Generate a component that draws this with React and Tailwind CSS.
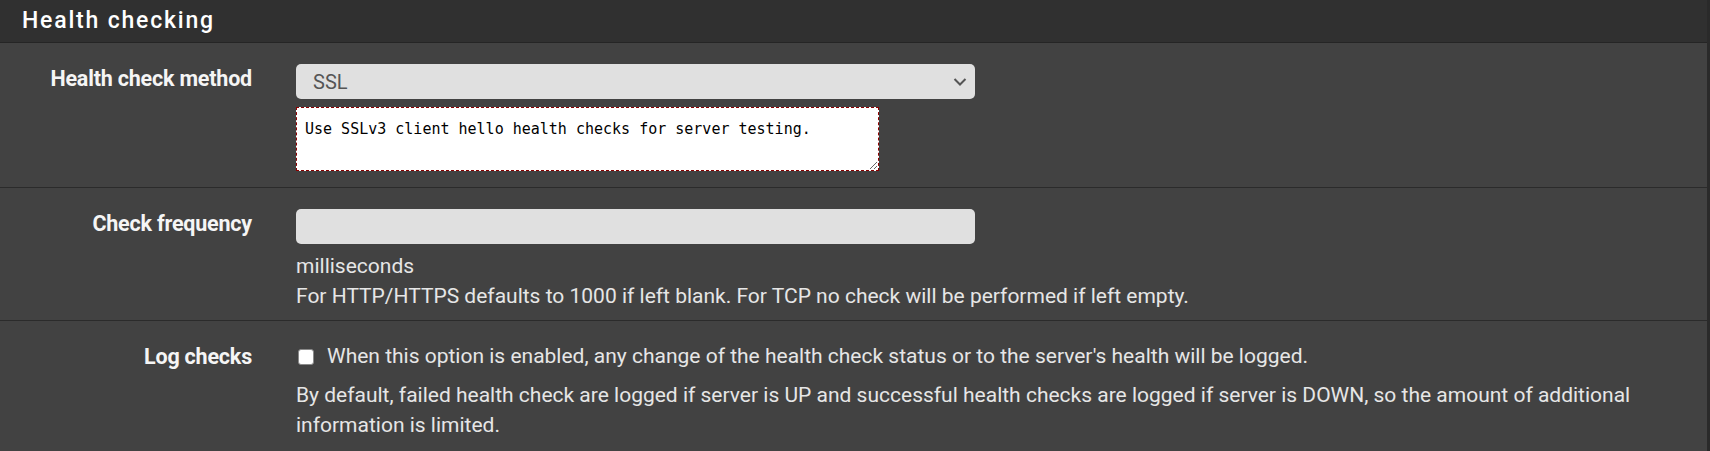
import React from 'react';

const FONT = { fontFamily: 'Roboto, "Noto Sans", sans-serif' };

function Row({ label, children, last }) {
  return (
    <div className={`flex ${last ? '' : 'border-b border-[#2b2b2b]'}`}>
      <div className="w-[252px] shrink-0 text-right pt-[20px]">
        <span className="text-[21.5px] leading-[32px] font-bold text-[#f5f5f5] tracking-[-0.2px]">{label}</span>
      </div>
      <div className="ml-[44px] flex-1 pr-4">{children}</div>
    </div>
  );
}

export default function App() {
  return (
    <div className="w-[1710px] h-[451px] bg-[#2a2a2a] overflow-hidden" style={FONT}>
      <div className="w-[1707px] h-full bg-[#424242]">
        {/* Panel heading */}
        <div className="h-[43px] bg-[#303030] border-b border-[#252525] pl-[22px] flex items-center">
          <h2 className="text-[23px] font-medium text-white tracking-[1.8px]">Health checking</h2>
        </div>

        {/* Health check method */}
        <Row label="Health check method">
          <div className="pt-[21px] pb-[16px]">
            <div className="w-[679px] h-[35px] rounded-[5px] bg-[#e0e0e0] flex items-center justify-between pl-[17px] pr-[8px]">
              <span className="text-[20px] text-[#555]">SSL</span>
              <svg width="14" height="10" viewBox="0 0 14 10" fill="none">
                <path d="M1.5 2 L7 7.5 L12.5 2" stroke="#555" strokeWidth="2" />
              </svg>
            </div>
            <textarea
              readOnly
              defaultValue="Use SSLv3 client hello health checks for server testing."
              className="mt-[8px] block w-[583px] h-[64px] bg-white border border-dashed border-[#8b0000] px-[8px] pt-[12px] text-[15px] leading-[18px] text-black outline-none"
              style={{ fontFamily: '"DejaVu Sans Mono", "Liberation Mono", monospace' }}
            />
          </div>
        </Row>

        {/* Check frequency */}
        <Row label="Check frequency">
          <div className="pt-[21px] pb-[9px]">
            <div className="w-[679px] h-[35px] rounded-[5px] bg-[#e0e0e0]" />
            <div className="mt-[7px] text-[21px] leading-[30px] text-[#e6e6e6]">
              <div>milliseconds</div>
              <div>For HTTP/HTTPS defaults to 1000 if left blank. For TCP no check will be performed if left empty.</div>
            </div>
          </div>
        </Row>

        {/* Log checks */}
        <Row label="Log checks" last>
          <div className="pt-[21px]">
            <label className="flex items-center gap-[13px] h-[30px] text-[21px] text-[#e6e6e6]">
              <span className="ml-[2px] w-[16px] h-[16px] shrink-0 rounded-[3px] bg-white border border-[#8a8a8a]" />
              <span className="whitespace-nowrap">When this option is enabled, any change of the health check status or to the server's health will be logged.</span>
            </label>
            <p className="mt-[8px] text-[21px] leading-[30px] text-[#e6e6e6] max-w-[1380px]">
              By default, failed health check are logged if server is UP and successful health checks are logged if server is DOWN, so the amount of additional information is limited.
            </p>
          </div>
        </Row>
      </div>
    </div>
  );
}
